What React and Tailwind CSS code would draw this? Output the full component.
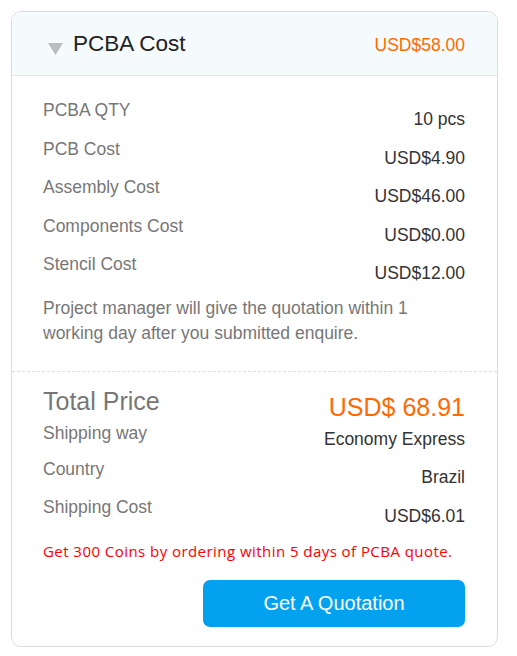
const font = { fontFamily: '"Liberation Sans", Arial, sans-serif' }

const costRows = [
  { label: 'PCBA QTY', value: '10 pcs' },
  { label: 'PCB Cost', value: 'USD$4.90' },
  { label: 'Assembly Cost', value: 'USD$46.00' },
  { label: 'Components Cost', value: 'USD$0.00' },
  { label: 'Stencil Cost', value: 'USD$12.00' },
]

const shippingRows = [
  { label: 'Shipping way', value: 'Economy Express', height: 'h-[35.5px]', offset: 'mt-[5.5px]' },
  { label: 'Country', value: 'Brazil', height: 'h-[38.5px]', offset: 'mt-[8px]' },
  { label: 'Shipping Cost', value: 'USD$6.01', height: 'h-[38.5px]', offset: 'mt-[9px]' },
]

function Row({ label, value, height = 'h-[38.5px]', offset = 'mt-[9px]' }) {
  return (
    <div className={`flex items-start justify-between ${height}`}>
      <span className="text-[17.5px] leading-[24px] text-[#777]">{label}</span>
      <span className={`text-[17.5px] leading-[24px] text-[#333] ${offset}`}>{value}</span>
    </div>
  )
}

export default function App() {
  return (
    <div className="bg-white p-[11px]" style={font}>
      <div className="w-[487px] overflow-hidden rounded-[10px] border border-[#dcdcdc] bg-white">
        <div className="flex h-[64px] items-center justify-between border-b border-[#e6e6e6] bg-[#f5fafd] pl-[36px] pr-[32px]">
          <div className="flex items-center">
            <svg width="15" height="12" viewBox="0 0 15 12" className="mt-[10px]">
              <polygon points="0,0 15,0 7.5,12" fill="#bdbdbd" />
            </svg>
            <span className="ml-[10px] text-[22.5px] text-[#222]">PCBA Cost</span>
          </div>
          <span className="mt-[4px] text-[17.5px] text-[#ff6a00]">USD$58.00</span>
        </div>

        <div className="px-[31px] pr-[32px] pb-[25px] pt-[22px]">
          {costRows.map((row) => (
            <Row key={row.label} label={row.label} value={row.value} />
          ))}
          <p className="mt-[5px] text-[17.5px] leading-[25px] text-[#777]">
            Project manager will give the quotation within 1 working day after you submitted enquire.
          </p>
        </div>

        <div className="border-t border-dashed border-[#dedede] px-[31px] pr-[32px] pb-[19px] pt-[15.5px]">
          <div className="flex h-[34px] items-start justify-between">
            <span className="text-[25px] leading-[28px] text-[#777]">Total Price</span>
            <span className="mt-[6px] text-[25px] leading-[28px] text-[#ff6a00]">USD$ 68.91</span>
          </div>
          {shippingRows.map((row) => (
            <Row key={row.label} {...row} />
          ))}
          <p
            className="mt-[7px] text-[15px] leading-[20px] tracking-[0.45px] text-[#ff0000]"
            style={{ fontFamily: '"Open Sans", "Noto Sans", sans-serif' }}
          >
            Get 300 Coins by ordering within 5 days of PCBA quote.
          </p>
          <div className="mt-[19px] flex justify-end">
            <button
              type="button"
              className="h-[47px] w-[262px] rounded-[7px] bg-[#03a1ee] text-[20px] text-white"
            >
              Get A Quotation
            </button>
          </div>
        </div>
      </div>
    </div>
  )
}
